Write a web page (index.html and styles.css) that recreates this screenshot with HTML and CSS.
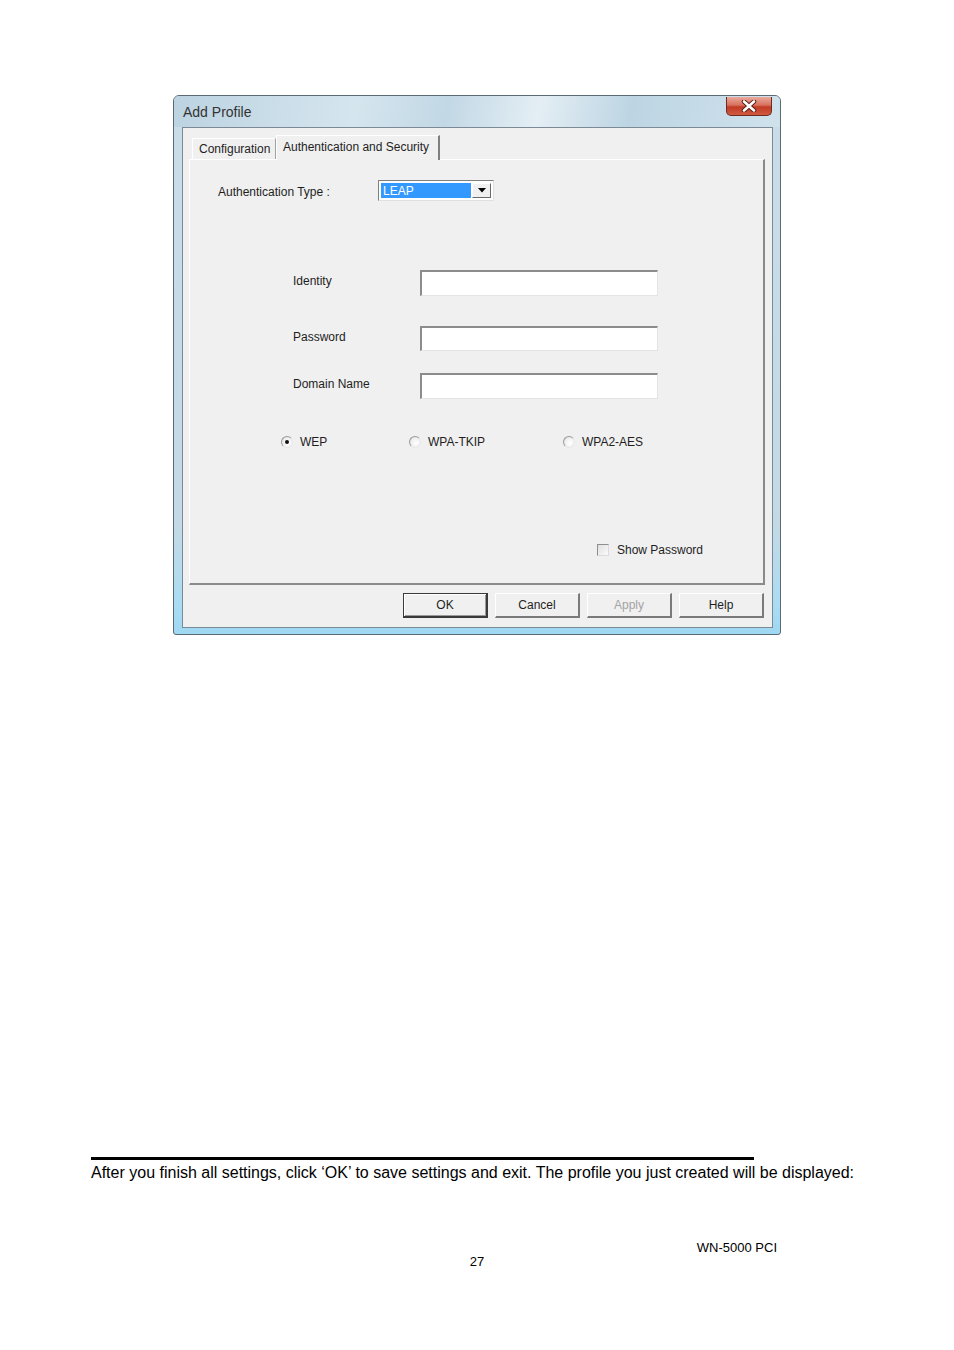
FILE: index.html
```html
<!DOCTYPE html>
<html lang="en">
<head>
    <meta charset="UTF-8">
    <title>Add Profile</title>
    <link rel="stylesheet" href="styles.css">
</head>
<body>
    <!-- Dialog window -->
    <div class="window">
        <div class="titlebar">
            <span class="title">Add Profile</span>
            <span class="close">
                <svg width="16" height="12" viewBox="0 0 16 12">
                    <path d="M3 1.5 L13 10.5 M13 1.5 L3 10.5" stroke="#5a1a12" stroke-width="4.5" stroke-linecap="round"/>
                    <path d="M3 1.5 L13 10.5 M13 1.5 L3 10.5" stroke="#ffffff" stroke-width="2.6" stroke-linecap="round"/>
                </svg>
            </span>
        </div>
        <div class="client">
            <div class="tabs">
                <div class="tab">Configuration</div>
                <div class="tab active">Authentication and Security</div>
            </div>
            <div class="panel">
                <div class="auth-row">
                    <span class="auth-label">Authentication Type :</span>
                    <div class="select">
                        <span class="select-value">LEAP</span>
                        <span class="select-btn">
                            <svg width="8" height="5" viewBox="0 0 8 5"><path d="M0 0 H8 L4 4.5 Z" fill="#000"/></svg>
                        </span>
                    </div>
                </div>

                <div class="field first">
                    <span class="field-label">Identity</span>
                    <div class="input"></div>
                </div>
                <div class="field second">
                    <span class="field-label">Password</span>
                    <div class="input short"></div>
                </div>
                <div class="field third">
                    <span class="field-label">Domain Name</span>
                    <div class="input"></div>
                </div>

                <div class="radios">
                    <div class="radio-item wep"><span class="radio checked"></span>WEP</div>
                    <div class="radio-item tkip"><span class="radio"></span>WPA-TKIP</div>
                    <div class="radio-item"><span class="radio"></span>WPA2-AES</div>
                </div>

                <div class="show-pw">
                    <span class="checkbox"></span>Show Password
                </div>
            </div>
            <div class="buttons">
                <div class="button default">OK</div>
                <div class="button">Cancel</div>
                <div class="button disabled">Apply</div>
                <div class="button">Help</div>
            </div>
        </div>
    </div>

    <!-- Page text -->
    <div class="footer">
        <div class="rule"></div>
        <p class="note">After you finish all settings, click ‘OK’ to save settings and exit. The profile you just created will be displayed:</p>
        <div class="model">WN-5000 PCI</div>
        <div class="page-num">27</div>
    </div>
</body>
</html>
```

FILE: styles.css
```css
body {
    margin: 0;
    padding: 0;
    background-color: #fff;
    font-family: "Liberation Sans", Arial, sans-serif;
    color: #000;
}
.window {
    box-sizing: border-box;
    width: 608px;
    height: 540px;
    margin: 95px 0 0 173px;
    padding: 0 7px 6px 8px;
    border: 1px solid #5c6a74;
    border-radius: 6px 6px 3px 3px;
    background: linear-gradient(to bottom, #c9dde9 0%, #c3d9e6 80%, #a9dcf3 95%, #9fd8f2 100%);
}
.titlebar {
    position: relative;
    height: 31px;
    margin: 0 -7px 0 -8px;
    padding-left: 9px;
    display: flex;
    align-items: center;
    border-radius: 5px 5px 0 0;
    background: linear-gradient(100deg, #bcd3e1 0%, #d5e5ee 30%, #c2d8e5 45%, #e4eef4 60%, #bdd5e3 75%, #cfe2ec 100%);
}
.title {
    font-size: 14px;
    color: #333;
    padding-top: 1px;
}
.close {
    position: absolute;
    top: 1px;
    right: 8px;
    width: 46px;
    height: 19px;
    box-sizing: border-box;
    border: 1px solid #6e2a20;
    border-top: none;
    border-radius: 0 0 5px 5px;
    background: linear-gradient(to bottom, #e9aa9c 0%, #d9715f 45%, #c23a25 55%, #cf5a3f 100%);
    display: flex;
    align-items: center;
    justify-content: center;
}
.client {
    box-sizing: border-box;
    height: 501px;
    border: 1px solid #7b8a95;
    background-color: #f0f0f0;
    padding-top: 7px;
    font-size: 12px;
    color: #1e1e1e;
}
.tabs {
    display: flex;
    align-items: flex-end;
    height: 24px;
    margin-left: 9px;
    position: relative;
    z-index: 1;
}
.tab {
    box-sizing: border-box;
    height: 21px;
    width: 84px;
    padding: 3px 0 0 6px;
    border: 1px solid #fff;
    border-bottom: none;
    border-right: 1px solid #a0a0a0;
    background-color: #f0f0f0;
}
.tab.active {
    height: 25px;
    width: 164px;
    margin-bottom: -1px;
    padding: 4px 0 0 6px;
    border-right: 2px solid #808080;
}
.panel {
    box-sizing: border-box;
    width: 576px;
    height: 426px;
    margin-left: 6px;
    border-top: 1px solid #fff;
    border-left: 1px solid #fff;
    border-right: 2px solid #8a8a8a;
    border-bottom: 2px solid #8a8a8a;
    padding-top: 20px;
}
.auth-row {
    display: flex;
    align-items: center;
    padding-left: 28px;
}
.auth-label {
    width: 160px;
    padding-top: 3px;
}
.select {
    box-sizing: border-box;
    width: 116px;
    height: 21px;
    display: flex;
    padding: 2px;
    border-top: 1px solid #808080;
    border-left: 1px solid #808080;
    border-right: 1px solid #e0e0e0;
    border-bottom: 1px solid #e0e0e0;
    background-color: #fff;
}
.select-value {
    flex: 1;
    background-color: #3399ff;
    color: #fff;
    font-size: 12px;
    line-height: 16px;
    padding-left: 2px;
}
.select-btn {
    box-sizing: border-box;
    width: 19px;
    margin-left: 1px;
    display: flex;
    align-items: center;
    justify-content: center;
    background-color: #f0f0f0;
    border-top: 1px solid #fff;
    border-left: 1px solid #fff;
    border-right: 1px solid #6a6a6a;
    border-bottom: 1px solid #6a6a6a;
}
.field {
    display: flex;
    align-items: center;
    padding-left: 103px;
}
.field.first { margin-top: 69px; }
.field.second { margin-top: 30px; }
.field.third { margin-top: 22px; }
.field-label {
    width: 127px;
    padding-bottom: 4px;
}
.input {
    box-sizing: border-box;
    width: 238px;
    height: 26px;
    background-color: #fff;
    border-top: 2px solid #8c8c8c;
    border-left: 2px solid #8c8c8c;
    border-right: 1px solid #e4e4e4;
    border-bottom: 1px solid #e4e4e4;
}
.input.short {
    height: 25px;
}
.radios {
    display: flex;
    align-items: center;
    margin-top: 36px;
    padding-left: 91px;
    font-size: 12px;
}
.radio-item {
    display: flex;
    align-items: center;
}
.radio-item.wep { width: 128px; }
.radio-item.tkip { width: 154px; }
.radio {
    box-sizing: border-box;
    width: 12px;
    height: 12px;
    margin-right: 7px;
    border-radius: 50%;
    border: 1px solid #9a9a9a;
    border-right-color: #e8e8e8;
    border-bottom-color: #e8e8e8;
    background: radial-gradient(circle at 60% 60%, #ffffff 0%, #f2f2f2 50%, #d6d6d6 100%);
    position: relative;
}
.radio.checked::after {
    content: "";
    position: absolute;
    left: 3px;
    top: 3px;
    width: 4px;
    height: 4px;
    border-radius: 50%;
    background-color: #111;
}
.show-pw {
    display: flex;
    align-items: center;
    margin-top: 94px;
    padding-left: 407px;
}
.checkbox {
    box-sizing: border-box;
    width: 12px;
    height: 12px;
    margin-right: 8px;
    border: 1px solid #8f8f8f;
    border-right-color: #dcdcdc;
    border-bottom-color: #dcdcdc;
    background: linear-gradient(135deg, #e0e0e0, #fafafa);
}
.buttons {
    display: flex;
    justify-content: flex-end;
    gap: 7px;
    margin-top: 8px;
    padding-right: 8px;
}
.button {
    box-sizing: border-box;
    width: 85px;
    height: 25px;
    display: flex;
    align-items: center;
    justify-content: center;
    border-top: 1px solid #fff;
    border-left: 1px solid #fff;
    border-right: 2px solid #7a7a7a;
    border-bottom: 2px solid #7a7a7a;
    background-color: #f0f0f0;
    font-size: 12px;
    color: #1e1e1e;
}
.button.default {
    border: 1px solid #3a3a3a;
    border-right: 2px solid #3a3a3a;
    border-bottom: 2px solid #3a3a3a;
    box-shadow: inset 1px 1px 0 #fff, inset -1px -1px 0 #9a9a9a;
}
.button.disabled {
    color: #a3a3a3;
}
.footer {
    margin-top: 522px;
}
.rule {
    width: 663px;
    height: 3px;
    margin-left: 91px;
    background-color: #000;
}
.note {
    margin: 3px 0 0 91px;
    font-size: 16px;
    line-height: 19px;
    white-space: nowrap;
}
.model {
    width: 777px;
    margin-top: 58px;
    text-align: right;
    font-size: 13px;
    line-height: 16px;
}
.page-num {
    text-align: center;
    font-size: 13px;
    line-height: 16px;
    margin-top: -2px;
}
```
